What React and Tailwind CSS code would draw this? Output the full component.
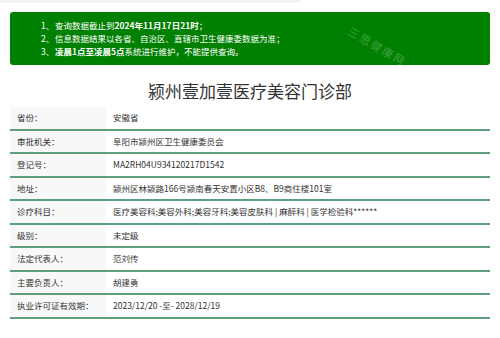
import React from "react";

const rows = [
  ["省份：", "安徽省"],
  ["审批机关：", "阜阳市颍州区卫生健康委员会"],
  ["登记号：", "MA2RH04U934120217D1542"],
  ["地址：", "颍州区林颍路166号颍南春天安置小区B8、B9商住楼101室"],
  ["诊疗科目：", "医疗美容科;美容外科;美容牙科;美容皮肤科 | 麻醉科 | 医学检验科******"],
  ["级别：", "未定级"],
  ["法定代表人：", "范刘传"],
  ["主要负责人：", "胡建勇"],
  ["执业许可证有效期：", "2023/12/20 -至- 2028/12/19"],
];

const App = () => {
  return (
    <div
      className="relative w-[500px] h-[338px] bg-white overflow-hidden"
      style={{ fontFamily: '"Noto Sans CJK SC", "Noto Sans", sans-serif' }}
    >
      <div className="h-[3px] w-[300px] bg-[#f3f3f3]"></div>
      <div className="mx-[10px] mt-[9px]">
        <div className="bg-[#008000] rounded-[3px] h-[53px] pt-[7px] pl-[31px] text-white text-[8.5px] leading-[13px]">
          <div className="flex">
            <span className="w-[14px]">1、</span>
            <span>
              查询数据截止到<b>2024年11月17日21时</b>；
            </span>
          </div>
          <div className="flex">
            <span className="w-[14px]">2、</span>
            <span>信息数据结果以各省、自治区、直辖市卫生健康委数据为准；</span>
          </div>
          <div className="flex">
            <span className="w-[14px]">3、</span>
            <span>
              <b>凌晨1点至凌晨5点</b>系统进行维护，不能提供查询。
            </span>
          </div>
        </div>

        <h1 className="text-center text-[17px] leading-[24px] text-[#333] mt-[14px] mb-[4px]">
          颍州壹加壹医疗美容门诊部
        </h1>

        <div className="flex flex-col">
          {rows.map(([label, value]) => (
            <div
              key={label}
              className="flex h-[23.5px] border-b-2 border-[#5e9f7e] text-[8.5px] text-[#333]"
            >
              <div className="w-[96px] bg-[#f8f8f8] pl-[7px] flex items-center">{label}</div>
              <div className="pl-[7px] flex items-center">{value}</div>
            </div>
          ))}
        </div>
      </div>

      <div className="absolute left-[345px] top-[38px] pointer-events-none text-[11px] tracking-[2px] rotate-[30deg] text-white/25">
        三思健康网
      </div>
    </div>
  );
};

export default App;
